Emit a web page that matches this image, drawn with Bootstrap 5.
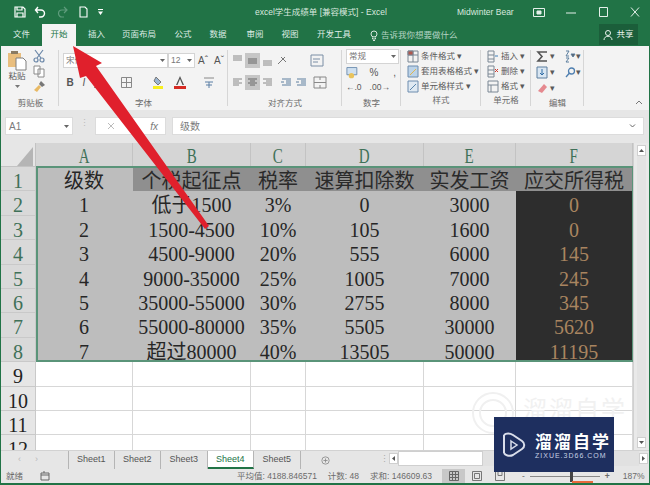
<!DOCTYPE html>
<html lang="zh">
<head>
<meta charset="utf-8">
<title>excel学生成绩单</title>
<link rel="stylesheet" href="https://cdn.jsdelivr.net/npm/bootstrap@5.3.0/dist/css/bootstrap.min.css">
<style>
html,body{margin:0;height:485px;overflow:hidden}
body{width:650px;font-family:"Liberation Sans","Noto Sans CJK SC",sans-serif;font-size:8.5px;color:#5a5a5a;background:#e6e6e6}
.xl-window{position:relative;width:650px;height:485px;border-left:1px solid #217346;border-right:1px solid #217346;border-bottom:2px solid #217346;overflow:hidden}
.xl-title{height:24px;background:#217346;color:#d9e8df;font-size:8.5px}
.xl-title .qa{width:254px;padding-left:13px;gap:8px}
.xl-doc{width:202px}
.xl-user{width:76px}
.xl-winbtns{gap:20px}
.xl-tabs{height:22px;background:#217346;color:#dfece5}
.xl-tab{height:22px;text-align:center;line-height:21px}
.t-file{width:41px}.t-home{width:34px;background:#f3f3f3;color:#217346}.t-ins{width:41px}.t-page{width:44px}.t-form{width:44px}.t-data{width:26px}.t-rev{width:48px}.t-view{width:22px}.t-dev{width:66px}
.xl-tell{width:232px;gap:3px;color:#b5d3c3;padding-left:3px}
.xl-share{width:39px;height:21px;background:#1b5e3a;color:#e9f2ed;gap:2px}
.xl-ribbon{height:64px;background:#f3f3f3;padding-left:1px}
.xl-grp{height:64px;flex:none;position:relative}
.xl-grp::after{content:"";position:absolute;right:0;top:4px;bottom:4px;width:1px;background:#d6d6d6}
.xl-grp-body{height:51px;padding-top:3px}
.xl-grp-name{height:13px;text-align:center;line-height:13px;color:#6a6a6a}
.g-clip{width:57px}.g-font{width:169px}.g-align{width:114px}.g-num{width:59px}.g-style{width:80px}.g-cell{width:50px}.g-edit{width:53px}
.g-rest{flex:1;text-align:right;padding:50px 6px 0 0}
.clip-paste{width:26px;padding-left:4px;line-height:10px;text-align:center}
.clip-small{gap:2px;width:22px;padding-top:0}
.row-tools{height:22px;gap:0;padding-left:4px}
.row-al{padding-left:2px}
.xl-combo{height:15px;background:#fff;border:1px solid #d4d4d4;padding:0 2px;color:#777}
.c-face{width:105px}.c-size{width:27px;margin-right:1px}.c-fmt{width:53px}
.ic-slot{width:15px;height:15px;flex:none}
.ic-on{background:#c6c6c6}
.ml-a{margin-left:2px}.ml-b{margin-left:20px}.ml-c{margin-left:8px}.ml-d{margin-left:20px}
.tool-txt{font-size:10px;color:#555;width:14px;text-align:center;line-height:15px}
.num-rows{padding-left:4px;gap:1px}
.stack-rows{padding-left:6px;height:48px;justify-content:space-between;padding-top:3px}
.stack-rows .d-flex{gap:2px;white-space:nowrap;height:15px}
.edit-grid{padding-left:5px;padding-top:2px;gap:0}
.edit-grid .d-flex{height:16px}
.edit-left{width:29px;gap:2px}
.xl-fbar{height:33px;padding:7px 5px 8px 4px;background:#e6e6e6}
.fb-box{height:18px;background:#fff;border:1px solid #dcdcdc;color:#7b7b7b;font-size:10px}
.fb-name{width:68px;padding:0 3px}
.fb-dots{width:22px;color:#bbb;text-align:center}
.fb-fx{width:71px;padding:0 3px;margin-right:6px}
.fb-val{flex:1;padding:0 7px}
.xl-sheetwrap{height:307px}
.xl-gridbox{position:relative;width:632px;height:307px;overflow:hidden}
.xl-grid{display:grid;grid-template-columns:35px 97px 118px 55px 118px 92px 117px;grid-template-rows:24px repeat(12,24.4px);font-family:"Liberation Serif","Noto Sans CJK SC",serif;font-size:20px;background:#fff;line-height:22px}
.xl-grid>div{text-align:center;white-space:nowrap;border-bottom:1px solid #d7d7d7;border-right:1px solid #d7d7d7;padding-top:3px;color:#000;overflow:hidden}
.xl-grid>.hc{background:#d5d5d5;color:#3f7158;border-color:#c3c3c3;padding-top:2px}
.hc span{display:inline-block;transform:scaleX(.75)}
.xl-grid>.corner{background:#e6e6e6;border-color:#c3c3c3;padding:0}
.xl-grid>.hr{background:#d9d9d9;color:#3f7158;border-color:#c9c9c9}
.xl-grid>.hn{background:#e6e6e6;color:#222;border-color:#c9c9c9}
.xl-grid>.gc{background:#bdbdbd;color:#262626;border-color:#bdbdbd}
.xl-grid>.gh{background:#8f8f8f;color:#2a2a2a;border-color:#8f8f8f}
.xl-grid>.dc{background:#2d2d2d;color:#a98560;border-color:#2d2d2d}
.xl-sel{position:absolute;left:35px;top:23px;width:598px;height:196px;border:2px solid #5a9479;pointer-events:none}
.xl-vbar{width:16px;background:#e9e9e9;padding:2px 3px;border-left:1px solid #d0d0d0}
.xl-sbtn{height:11px;width:9px;background:#fff;border:1px solid #cfcfcf;display:flex;align-items:center;justify-content:center}
.xl-vthumb{flex:1;background:#e3e3e3}
.xl-tabstrip{height:19px;background:#e6e6e6;border-top:1px solid #d2d2d2;font-size:9px;color:#555}
.ts-nav{width:67px;gap:14px;padding-left:17px;color:#b8b8b8}
.xl-sheet{width:46.5px;height:18px;text-align:center;line-height:16px;border-right:1px solid #b5b5b5}
.xl-sheet-first{border-left:1px solid #b5b5b5}
.xl-sheet-on{background:#fff;color:#217346;border-bottom:2px solid #217346;font-weight:500}
.ts-plus{width:88px;padding-left:20px;gap:50px;color:#aaa}
.ts-scroll{flex:1;gap:0;padding:0 1px 0 0;height:15px}
.ts-thumb{width:85px;height:15px;background:#fff;border:1px solid #cfcfcf}
.ts-track{flex:1;height:15px;background:#e1e1e1}
.xl-status{height:14px;background:#e6e6e6;color:#6b6b6b;font-size:8.5px}
.st-left{width:236px;padding-left:5px;gap:17px}
.st-sums{gap:11px;width:205px}
.st-view{width:23px;height:14px;text-align:center}
.st-view-on{background:#c8c8c8}
.st-zoom{padding-left:11px;gap:5px}
.st-track{width:70px;height:1px;background:#888;position:relative}
.st-knob{position:absolute;left:40px;top:-5px;width:3px;height:11px;background:#444}
.xl-arrow{position:absolute;left:-1px;top:0;pointer-events:none}
.xl-logo{position:absolute;left:493px;top:417px;width:120px;height:55px;background:#1e2f5f;color:#fff;gap:9px;padding-left:8px}
.lg-cn{font-size:17px;font-weight:700;letter-spacing:2px;line-height:21px;white-space:nowrap;font-family:"Noto Sans CJK SC",sans-serif}
.lg-en{font-size:7px;letter-spacing:1px;line-height:9px;color:#c7cfe4;white-space:nowrap}
.xl-wm{position:absolute;left:469px;top:390px;pointer-events:none}
.xl-wmtext{position:absolute;left:522px;top:397px;font-size:24px;letter-spacing:2px;line-height:26px;color:#f1f1f1;white-space:nowrap;pointer-events:none}
.xl-chip{position:absolute;left:571px;top:481px;width:21px;height:3px;background:#e8693c}
</style>
</head>
<body>
<div class="xl-window d-flex flex-column">
  <div class="xl-title d-flex align-items-center">
    <div class="qa d-flex align-items-center">
      <svg width="12" height="12" viewBox="0 0 12 12" fill="none" stroke="#fff" stroke-width="1.2"><path d="M1 1h8l2 2v8H1zM3 1v3h5V1M3 11V7h6v4"/></svg>
      <svg width="14" height="12" viewBox="0 0 14 12" fill="none" stroke="#fff" stroke-width="1.4"><path d="M4 1L1.500 4 4 7M2 4h5a3.500 3.500 0 0 1 0 7H5"/></svg>
      <svg width="14" height="12" viewBox="0 0 14 12" fill="none" stroke="#5f9c7d" stroke-width="1.2"><path d="M8 1l3 3-3 3M11 4H6a3.500 3.500 0 0 0 0 7h2"/></svg>
      <svg width="11" height="12" viewBox="0 0 11 12" fill="none" stroke="#fff" stroke-width="1.1"><path d="M2 1h5l2 2v8H2z"/></svg>
      <svg width="7" height="6" viewBox="0 0 7 6" fill="#fff"><path d="M1 0h5v1H1zM1 2.500h5L3.500 6z"/></svg>
    </div>
    <div class="xl-doc text-nowrap">excel学生成绩单 [兼容模式] - Excel</div>
    <div class="xl-user text-nowrap">Midwinter Bear</div>
    <div class="xl-winbtns d-flex align-items-center">
      <svg width="12" height="9" viewBox="0 0 12 9" fill="none" stroke="#e5f0ea"><path d="M.5.500h11v8H.5z"/><path d="M4 3h4v3H4z" fill="#e5f0ea"/></svg>
      <svg width="12" height="9" viewBox="0 0 12 9" stroke="#e5f0ea"><path d="M1 5h10"/></svg>
      <svg width="12" height="10" viewBox="0 0 12 10" fill="none" stroke="#e5f0ea"><path d="M2.500.500h8v9h-8z"/></svg>
      <svg width="12" height="10" viewBox="0 0 12 10" fill="none" stroke="#e5f0ea"><path d="M2 .500l8 9M10 .500l-8 9"/></svg>
    </div>
  </div>
  <nav class="xl-tabs nav flex-nowrap align-items-start">
    <div class="xl-tab t-file">文件</div>
    <div class="xl-tab t-home">开始</div>
    <div class="xl-tab t-ins">插入</div>
    <div class="xl-tab t-page">页面布局</div>
    <div class="xl-tab t-form">公式</div>
    <div class="xl-tab t-data">数据</div>
    <div class="xl-tab t-rev">审阅</div>
    <div class="xl-tab t-view">视图</div>
    <div class="xl-tab t-dev">开发工具</div>
    <div class="xl-tell xl-tab d-flex align-items-center">
      <svg width="8" height="11" viewBox="0 0 8 11" fill="none" stroke="#d5e6dc"><circle cx="4" cy="4" r="3"/><path d="M2.500 7.500v1.500h3V7.500M3 10.500h2"/></svg>
      <span>告诉我你想要做什么</span>
    </div>
    <div class="xl-share d-flex align-items-center justify-content-center">
      <svg width="11" height="12" viewBox="0 0 11 12" fill="none" stroke="#e9f2ed"><circle cx="5" cy="4" r="2.500"/><path d="M1 11c0-5 8-5 8 0"/></svg>
      <span>共享</span>
    </div>
  </nav>
  <div class="xl-ribbon d-flex">
    <div class="xl-grp g-clip">
      <div class="xl-grp-body d-flex">
        <div class="clip-paste">
          <svg width="20" height="22" viewBox="0 0 20 22"><path d="M1 4h13v14H1z" fill="#e9be7e"/><path d="M4 2h7v3H4z" fill="#8a7b63"/><path d="M9 9h7l3 3v9H9z" fill="#fff" stroke="#7f7f7f"/></svg>
          <div>粘贴</div>
          <svg width="5" height="3" viewBox="0 0 5 3" fill="#777"><path d="M0 0h5L2.500 3z"/></svg>
        </div>
        <div class="clip-small d-flex flex-column align-items-center">
          <svg width="12" height="14" viewBox="0 0 12 14" fill="none" stroke="#6b87a8" stroke-width="1.2"><path d="M2 1l6 8M10 1L4 9"/><circle cx="3" cy="11" r="2"/><circle cx="9" cy="11" r="2"/></svg>
          <svg width="13" height="13" viewBox="0 0 13 13" fill="#fff" stroke="#8a8a8a"><path d="M1 1h6v8H1zM5 4h6v8H5z"/></svg>
          <svg width="13" height="13" viewBox="0 0 13 13"><path d="M8 1l4 4-3 2-3-3z" fill="#777"/><path d="M6 5l2 2-4 5-3-2z" fill="#e8b964"/></svg>
        </div>
      </div>
      <div class="xl-grp-name">剪贴板</div>
    </div>
    <div class="xl-grp g-font">
      <div class="xl-grp-body">
        <div class="row-tools d-flex align-items-center">
          <div class="xl-combo c-face d-flex align-items-center justify-content-between"><span>宋体</span><svg width="5" height="3" viewBox="0 0 5 3" fill="#666"><path d="M0 0h5L2.500 3z"/></svg></div>
          <div class="xl-combo c-size d-flex align-items-center justify-content-between"><span>12</span><svg width="5" height="3" viewBox="0 0 5 3" fill="#666"><path d="M0 0h5L2.500 3z"/></svg></div>
          <div class="tool-txt">Aˆ</div><div class="tool-txt ml-a">Aˇ</div>
        </div>
        <div class="row-tools d-flex align-items-center">
          <div class="tool-txt fw-bold">B</div>
          <div class="tool-txt fst-italic">I</div>
          <div class="tool-txt text-decoration-underline">U</div>
          <svg class="ms-3" width="11" height="11" viewBox="0 0 11 11" fill="none" stroke="#888"><path d="M.5.500h10v10H.5zM5.500.500v10M.5 5.500h10"/></svg>
          <svg class="ml-d" width="14" height="13" viewBox="0 0 14 13"><path d="M4 1l5 5-3 3-4-4z" fill="#9ab5d2" stroke="#777"/><path d="M1 10h10v3H1z" fill="#f7ee1e"/></svg>
          <svg class="ml-c" width="12" height="13" viewBox="0 0 12 13"><path d="M6 0L2 9h1.500L6 3l2.500 6H10z" fill="#555"/><path d="M0 10h12v3H0z" fill="#d62b23"/></svg>
          <div class="ms-3 tool-txt"><svg width="12" height="13" viewBox="0 0 12 13" fill="none" stroke="#5a7fa5"><path d="M2 6h8M6 6v6M3 9h6"/><path d="M1 2h10" stroke="#888"/></svg></div>
        </div>
      </div>
      <div class="xl-grp-name">字体</div>
    </div>
    <div class="xl-grp g-align">
      <div class="xl-grp-body">
        <div class="row-tools row-al d-flex align-items-center">
          <svg class="ic-slot" viewBox="0 0 15 15" stroke="#888"><path d="M3 3h9M3 5h9M3 7h9"/></svg>
          <svg class="ic-slot ic-on" viewBox="0 0 15 15" stroke="#666"><path d="M3 6h9M3 8h9M3 10h9"/></svg>
          <svg class="ic-slot" viewBox="0 0 15 15" stroke="#888"><path d="M3 8h9M3 10h9M3 12h9"/></svg>
          <svg class="ic-slot" viewBox="0 0 15 15" stroke="#777" fill="none"><path d="M3 11l7-7M6 4l5 5"/></svg>
          <svg class="ic-slot ml-b" viewBox="0 0 15 15" stroke="#7a8ea5" fill="none"><path d="M1 2h12v11H1zM3 6h7M3 9h5"/></svg>
        </div>
        <div class="row-tools row-al d-flex align-items-center">
          <svg class="ic-slot" viewBox="0 0 15 15" stroke="#888"><path d="M3 4h9M3 6h6M3 8h9M3 10h6"/></svg>
          <svg class="ic-slot ic-on" viewBox="0 0 15 15" stroke="#666"><path d="M3 4h9M5 6h5M3 8h9M5 10h5"/></svg>
          <svg class="ic-slot" viewBox="0 0 15 15" stroke="#888"><path d="M3 4h9M6 6h6M3 8h9M6 10h6"/></svg>
          <svg class="ic-slot ms-1" viewBox="0 0 15 15" stroke="#5d7f9f"><path d="M3 4h9M7 6h5M7 8h5M3 10h9M2 7h3"/></svg>
          <svg class="ic-slot" viewBox="0 0 15 15" stroke="#5d7f9f"><path d="M3 4h9M7 6h5M7 8h5M3 10h9M2 7h3"/></svg>
          <svg class="ic-slot ms-1" viewBox="0 0 15 15" stroke="#888" fill="none"><path d="M1 2h12v11H1zM7 2v3M7 10v3M1 7.500h12"/></svg>
        </div>
      </div>
      <div class="xl-grp-name">对齐方式</div>
    </div>
    <div class="xl-grp g-num">
      <div class="xl-grp-body num-rows d-flex flex-column">
        <div class="xl-combo c-fmt d-flex align-items-center justify-content-between"><span>常规</span><svg width="5" height="3" viewBox="0 0 5 3" fill="#666"><path d="M0 0h5L2.500 3z"/></svg></div>
        <div class="d-flex align-items-center gap-2">
          <svg width="13" height="13" viewBox="0 0 13 13"><path d="M1 1h11v8H1z" fill="#cfe0f0" stroke="#6c8cae"/><circle cx="6" cy="10" r="3" fill="#e9c35c"/></svg>
          <span class="tool-txt ml-a">%</span><span class="tool-txt">,</span>
        </div>
        <div class="d-flex align-items-center gap-2 text-nowrap"><span>←.0</span><span>.00→</span></div>
      </div>
      <div class="xl-grp-name">数字</div>
    </div>
    <div class="xl-grp g-style">
      <div class="xl-grp-body stack-rows d-flex flex-column">
        <div class="d-flex align-items-center"><svg width="12" height="13" viewBox="0 0 12 13" fill="none" stroke="#7b8794"><path d="M1 1h10v11H1zM1 5h10M6 1v11"/><path d="M1 1h5v4H1z" fill="#b0584e"/></svg><span>条件格式 ▾</span></div>
        <div class="d-flex align-items-center"><svg width="12" height="13" viewBox="0 0 12 13" fill="#bcd3e8" stroke="#6c8cae"><path d="M1 1h10v11H1z"/><path d="M3 10l6-6" stroke="#e0b64f"/></svg><span>套用表格格式 ▾</span></div>
        <div class="d-flex align-items-center"><svg width="12" height="13" viewBox="0 0 12 13" fill="#dfe9f2" stroke="#6c8cae"><path d="M1 1h10v11H1z"/><path d="M3 10l6-6" stroke="#5b86ad"/></svg><span>单元格样式 ▾</span></div>
      </div>
      <div class="xl-grp-name">样式</div>
    </div>
    <div class="xl-grp g-cell">
      <div class="xl-grp-body stack-rows d-flex flex-column">
        <div class="d-flex align-items-center"><svg width="12" height="13" viewBox="0 0 12 13" fill="none" stroke="#7b8794"><path d="M1 1h6v11H1zM1 5h6M1 9h6"/><path d="M8 6h3" stroke="#3a7cb8"/></svg><span>插入 ▾</span></div>
        <div class="d-flex align-items-center"><svg width="12" height="13" viewBox="0 0 12 13" fill="none" stroke="#7b8794"><path d="M1 1h6v11H1zM1 5h6M1 9h6"/><path d="M8 4l3 3M11 4L8 7" stroke="#d0392e"/></svg><span>删除 ▾</span></div>
        <div class="d-flex align-items-center"><svg width="12" height="13" viewBox="0 0 12 13" fill="none" stroke="#7b8794"><path d="M1 1h10v11H1zM1 5h10M4 5v7"/></svg><span>格式 ▾</span></div>
      </div>
      <div class="xl-grp-name">单元格</div>
    </div>
    <div class="xl-grp g-edit">
      <div class="xl-grp-body edit-grid d-flex flex-column">
        <div class="d-flex align-items-center"><div class="edit-left d-flex align-items-center"><svg width="12" height="13" viewBox="0 0 12 13" fill="none" stroke="#555" stroke-width="1.600"><path d="M11 2H2l4 4.500L2 11h9"/></svg><span>▾</span></div><svg width="11" height="13" viewBox="0 0 11 13" fill="none" stroke="#5d7f9f"><path d="M1 1h3L1 6h3M1 8h3L1 12h3"/><path d="M6 4h4l-2 3z" fill="#555"/></svg><span>▾</span></div>
        <div class="d-flex align-items-center"><div class="edit-left d-flex align-items-center"><svg width="12" height="13" viewBox="0 0 12 13" fill="#d9e6f2" stroke="#5d7f9f"><path d="M1 1h10v11H1z"/><path d="M6 3v6M4 7l2 2 2-2" fill="none" stroke="#2f6ca5"/></svg><span>▾</span></div><svg width="11" height="13" viewBox="0 0 11 13" fill="none" stroke="#4f7fb0" stroke-width="1.300"><circle cx="6.500" cy="5" r="3"/><path d="M4.500 7L1 11"/></svg><span>▾</span></div>
        <div class="d-flex align-items-center"><div class="edit-left d-flex align-items-center"><svg width="12" height="13" viewBox="0 0 12 13"><path d="M8 2l3 3-5 6-4-2z" fill="#e5898f"/></svg><span>▾</span></div></div>
      </div>
      <div class="xl-grp-name">编辑</div>
    </div>
    <div class="g-rest"><svg width="8" height="5" viewBox="0 0 8 5" fill="none" stroke="#777"><path d="M1 4l3-3 3 3"/></svg></div>
  </div>
  <div class="xl-fbar d-flex">
    <div class="fb-box fb-name d-flex align-items-center justify-content-between"><span>A1</span><svg width="5" height="3" viewBox="0 0 5 3" fill="#666"><path d="M0 0h5L2.500 3z"/></svg></div>
    <div class="fb-dots">⋮</div>
    <div class="fb-box fb-fx d-flex align-items-center justify-content-between"><svg class="ms-2" width="8" height="8" viewBox="0 0 8 8" stroke="#bbb"><path d="M1 1l6 6M7 1L1 7"/></svg><i class="me-1">fx</i></div>
    <div class="fb-box fb-val d-flex align-items-center justify-content-between"><span>级数</span><svg width="7" height="4" viewBox="0 0 7 4" fill="none" stroke="#666"><path d="M1 .500l2.500 2.500L6 .500"/></svg></div>
  </div>
  <div class="xl-sheetwrap d-flex">
    <div class="xl-gridbox">
    <div class="xl-grid">
      <div class="corner"><svg width="34" height="23" viewBox="0 0 34 23"><path d="M32 2v19H16z" fill="#b5b5b5"/></svg></div>
      <div class="hc"><span>A</span></div><div class="hc"><span>B</span></div><div class="hc"><span>C</span></div><div class="hc"><span>D</span></div><div class="hc"><span>E</span></div><div class="hc"><span>F</span></div>
      <div class="hr">1</div><div class="gc">级数</div><div class="gh">个税起征点</div><div class="gh">税率</div><div class="gh">速算扣除数</div><div class="gh">实发工资</div><div class="gh">应交所得税</div>
      <div class="hr">2</div><div class="gc">1</div><div class="gc">低于1500</div><div class="gc">3%</div><div class="gc">0</div><div class="gc">3000</div><div class="dc">0</div>
      <div class="hr">3</div><div class="gc">2</div><div class="gc">1500-4500</div><div class="gc">10%</div><div class="gc">105</div><div class="gc">1600</div><div class="dc">0</div>
      <div class="hr">4</div><div class="gc">3</div><div class="gc">4500-9000</div><div class="gc">20%</div><div class="gc">555</div><div class="gc">6000</div><div class="dc">145</div>
      <div class="hr">5</div><div class="gc">4</div><div class="gc">9000-35000</div><div class="gc">25%</div><div class="gc">1005</div><div class="gc">7000</div><div class="dc">245</div>
      <div class="hr">6</div><div class="gc">5</div><div class="gc">35000-55000</div><div class="gc">30%</div><div class="gc">2755</div><div class="gc">8000</div><div class="dc">345</div>
      <div class="hr">7</div><div class="gc">6</div><div class="gc">55000-80000</div><div class="gc">35%</div><div class="gc">5505</div><div class="gc">30000</div><div class="dc">5620</div>
      <div class="hr">8</div><div class="gc">7</div><div class="gc">超过80000</div><div class="gc">40%</div><div class="gc">13505</div><div class="gc">50000</div><div class="dc">11195</div>
      <div class="hn">9</div><div></div><div></div><div></div><div></div><div></div><div></div>
      <div class="hn">10</div><div></div><div></div><div></div><div></div><div></div><div></div>
      <div class="hn">11</div><div></div><div></div><div></div><div></div><div></div><div></div>
      <div class="hn">12</div><div></div><div></div><div></div><div></div><div></div><div></div>
    </div>
    <div class="xl-sel"></div>
    </div>
    <div class="xl-vbar d-flex flex-column">
      <div class="xl-sbtn"><svg width="5" height="3" viewBox="0 0 5 3" fill="#555"><path d="M0 3h5L2.500 0z"/></svg></div>
      <div class="xl-vthumb"></div>
      <div class="xl-sbtn"><svg width="5" height="3" viewBox="0 0 5 3" fill="#555"><path d="M0 0h5L2.500 3z"/></svg></div>
    </div>
  </div>
  <div class="xl-tabstrip d-flex">
    <div class="ts-nav d-flex align-items-center"><span>‹</span><span>›</span></div>
    <div class="xl-sheet xl-sheet-first">Sheet1</div>
    <div class="xl-sheet">Sheet2</div>
    <div class="xl-sheet">Sheet3</div>
    <div class="xl-sheet xl-sheet-on">Sheet4</div>
    <div class="xl-sheet">Sheet5</div>
    <div class="ts-plus d-flex align-items-center"><svg width="11" height="11" viewBox="0 0 11 11" fill="none" stroke="#888"><circle cx="5.500" cy="5.500" r="4.500"/><path d="M3 5.500h5M5.500 3v5"/></svg><span>⋮</span></div>
    <div class="ts-scroll d-flex align-items-center">
      <div class="xl-sbtn"><svg width="3" height="5" viewBox="0 0 3 5" fill="#555"><path d="M3 0v5L0 2.500z"/></svg></div>
      <div class="ts-thumb"></div>
      <div class="ts-track"></div>
      <div class="xl-sbtn"><svg width="3" height="5" viewBox="0 0 3 5" fill="#555"><path d="M0 0v5l3-2.500z"/></svg></div>
    </div>
  </div>
  <div class="xl-status d-flex align-items-center">
    <div class="st-left d-flex align-items-center"><span>就绪</span><svg width="10" height="10" viewBox="0 0 10 10" fill="none" stroke="#666"><path d="M1 2h8v7H1zM1 4h8M4 0v2"/></svg></div>
    <div class="st-sums d-flex text-nowrap"><span>平均值: 4188.846571</span><span>计数: 48</span><span>求和: 146609.63</span></div>
    <div class="st-view st-view-on"><svg width="10" height="10" viewBox="0 0 10 10" fill="none" stroke="#666"><path d="M.5.500h9v9h-9zM.5 3.500h9M.5 6.500h9M3.500.500v9M6.500.500v9"/></svg></div>
    <div class="st-view"><svg width="10" height="10" viewBox="0 0 10 10" fill="none" stroke="#777"><path d="M.5.500h9v9h-9zM2.500 2.500h5v5h-5z"/></svg></div>
    <div class="st-view"><svg width="10" height="10" viewBox="0 0 10 10" fill="none" stroke="#777"><path d="M.5.500h9v9h-9zM3 .500v4h4v-4"/></svg></div>
    <div class="st-zoom d-flex align-items-center text-nowrap"><span>-</span><div class="st-track"><div class="st-knob"></div></div><span class="fw-bold">+</span><span class="ms-2">187%</span></div>
  </div>

  <svg class="xl-arrow" width="230" height="240" viewBox="0 0 230 240"><path d="M73 46L102 63 96 66 209 226 205 229 86 76 80 78z" fill="#e0202c"/></svg>
  <svg class="xl-wm" width="50" height="50" viewBox="0 0 50 50" fill="none" stroke="#f0f0f0" stroke-width="2"><circle cx="23" cy="23" r="20"/><circle cx="23" cy="23" r="13"/></svg>
  <div class="xl-wmtext">溜溜自学</div>
  <div class="xl-logo d-flex align-items-center">
    <svg width="24" height="28" viewBox="0 0 24 28" fill="none" stroke="#d9deeb" stroke-width="2"><path d="M2 4v18M2 4c2-2 6-2 9 0l9 6c3 2 3 6 0 8l-9 6c-4 2-8 0-9-2"/><path d="M9 10l6 4-6 4z" stroke-width="1.500"/></svg>
    <div><div class="lg-cn">溜溜自学</div><div class="lg-en">ZIXUE.3D66.COM</div></div>
  </div>
  <div class="xl-chip"></div>
</div>
<script src="https://cdn.jsdelivr.net/npm/bootstrap@5.3.0/dist/js/bootstrap.bundle.min.js"></script>
</body>
</html>
